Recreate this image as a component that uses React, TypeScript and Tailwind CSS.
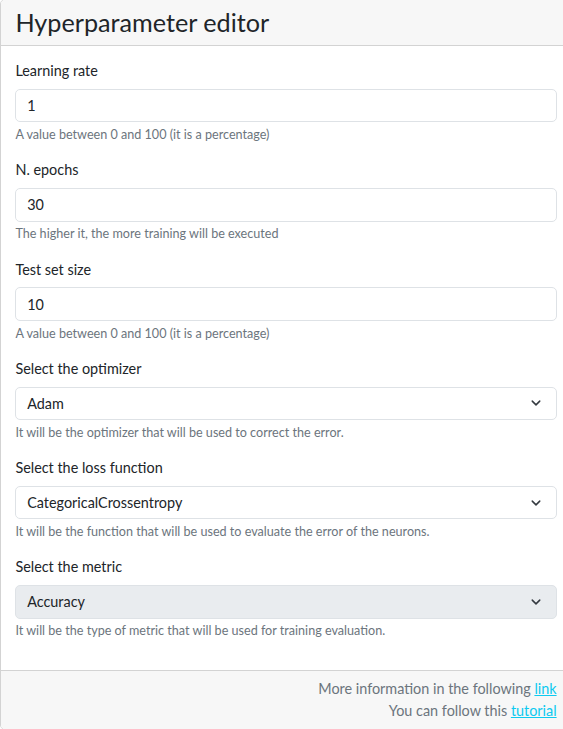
import React from "react";

const fields = [
  { label: "Learning rate", value: "1", help: "A value between 0 and 100 (it is a percentage)" },
  { label: "N. epochs", value: "30", help: "The higher it, the more training will be executed" },
  { label: "Test set size", value: "10", help: "A value between 0 and 100 (it is a percentage)" },
];

const selects = [
  { label: "Select the optimizer", value: "Adam", help: "It will be the optimizer that will be used to correct the error." },
  { label: "Select the loss function", value: "CategoricalCrossentropy", help: "It will be the function that will be used to evaluate the error of the neurons." },
  { label: "Select the metric", value: "Accuracy", help: "It will be the type of metric that will be used for training evaluation.", disabled: true },
];

function Chevron() {
  return (
    <svg className="w-[12px] h-[12px] text-[#343a40]" viewBox="0 0 16 16" fill="none" stroke="currentColor">
      <path strokeLinecap="round" strokeLinejoin="round" strokeWidth="2" d="m3 5.5 5 5 5-5" />
    </svg>
  );
}

export default function App() {
  return (
    <div className="w-[563px] h-[729px] overflow-hidden bg-white font-['Segoe_UI','Lato',sans-serif] text-[#212529]">
      <div className="w-[572px] -mt-px border border-[#d3d3d3] rounded-[5px] overflow-hidden">
        <div className="bg-[#f7f7f7] border-b border-[#d3d3d3] px-[14.4px] py-[7.2px]">
          <h3 className="text-[25.2px] leading-[1.2] font-normal">Hyperparameter editor</h3>
        </div>

        <div className="p-[14.4px]">
          {fields.map((f) => (
            <div key={f.label} className="mb-[14.4px]">
              <label className="block mb-[7.2px] text-[14.4px] leading-[1.5]">{f.label}</label>
              <input
                defaultValue={f.value}
                className="block w-full h-[33.6px] px-[10.8px] text-[14.4px] text-[#212529] border border-[#dee2e6] rounded-[5px] bg-white outline-none"
              />
              <div className="mt-[3.6px] text-[12.6px] leading-[1.5] text-[#6c757d]">{f.help}</div>
            </div>
          ))}
          {selects.map((s) => (
            <div key={s.label} className="mb-[14.4px]">
              <label className="block mb-[7.2px] text-[14.4px] leading-[1.5]">{s.label}</label>
              <div
                className={
                  "flex items-center justify-between h-[33.6px] pl-[10.8px] pr-[14px] text-[14.4px] border border-[#dee2e6] rounded-[5px] " +
                  (s.disabled ? "bg-[#e9ecef]" : "bg-white")
                }
              >
                <span>{s.value}</span>
                <Chevron />
              </div>
              <div className="mt-[3.6px] text-[12.6px] leading-[1.5] text-[#6c757d]">{s.help}</div>
            </div>
          ))}
        </div>

        <div className="bg-[#f7f7f7] border-t border-[#d3d3d3] pl-[14.4px] pr-[14.4px] py-[7.2px] text-right text-[14.4px] leading-[1.5] text-[#6c757d]">
          <p>
            More information in the following{" "}
            <a href="#" className="text-[#0dcaf0] underline">link</a>
          </p>
          <p>
            You can follow this{" "}
            <a href="#" className="text-[#0dcaf0] underline">tutorial</a>
          </p>
        </div>
      </div>
    </div>
  );
}
